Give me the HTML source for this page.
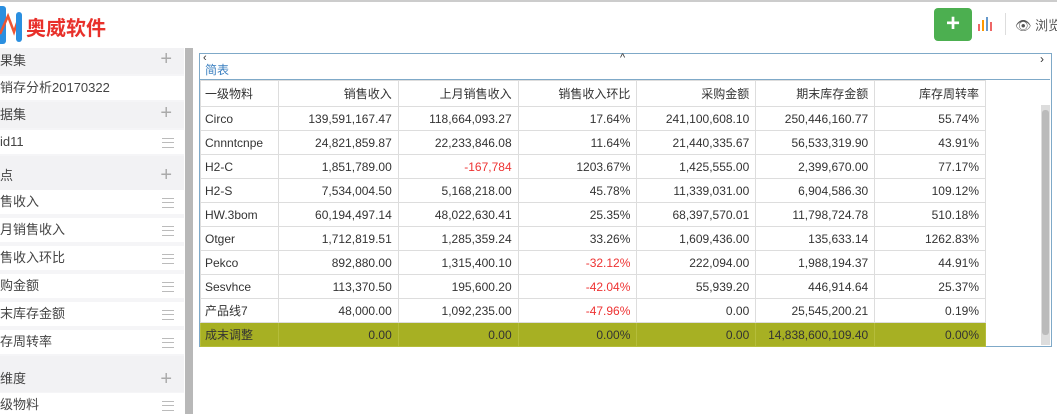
<!DOCTYPE html><html><head><meta charset="utf-8"><style>
body{margin:0;width:1057px;height:414px;overflow:hidden;background:#fff;font-family:"Liberation Sans","Noto Sans CJK SC",sans-serif;position:relative}
.a{position:absolute}
.side{left:0;top:48px;width:184px;height:366px;background:#f5f5f7}
.sh{position:absolute;left:0;width:184px;font-size:13px;color:#444;background:#f2f2f4}
.si{position:absolute;left:0;width:184px;height:24px;background:#fff;font-size:13px;color:#444;line-height:24px}
.plus{position:absolute;right:12px;top:0;color:#aaa;font-size:20px;line-height:22px}
.menu{position:absolute;right:10px;top:8px;width:12px;height:8px;border-top:1px solid #bbb;border-bottom:1px solid #bbb}
.menu:after{content:"";position:absolute;left:0;top:3px;width:12px;border-top:1px solid #bbb}
table{border-collapse:collapse;font-size:12px;color:#333}
td{border:1px solid #ddd;height:23px;padding:0 6px;text-align:right;white-space:nowrap}
td:first-child{text-align:left;padding-left:4px}
.r{color:#e33}
tr.g td{background:#a7b023;border-color:#b5bd3a}
</style></head><body>
<div class="a" style="left:0;top:0;width:1057px;height:2px;background:#ccc"></div>
<div class="a" style="left:0;top:6px;width:6px;height:38px;background:#2b8fe0;border-radius:0 3px 3px 0"></div>
<svg class="a" style="left:0;top:8px" width="26" height="36"><path d="M0 26 L8 8 L14 24 L20 6" stroke="#e53" stroke-width="2.5" fill="none"/><rect x="16" y="4" width="6" height="30" rx="3" fill="#2b8fe0"/></svg>
<div class="a" style="left:26px;top:12px;font-size:20px;font-weight:bold;color:#e8302a;font-family:'Noto Sans CJK SC',sans-serif">奥威软件</div>
<div class="a" style="left:934px;top:8px;width:38px;height:33px;background:#4caf50;border-radius:4px;color:#fff;font-size:24px;font-weight:bold;text-align:center;line-height:32px">+</div>
<svg class="a" style="left:977px;top:16px" width="16" height="16"><rect x="1" y="8" width="2" height="7" fill="#e66"/><rect x="5" y="4" width="2" height="11" fill="#f90"/><rect x="9" y="1" width="2" height="14" fill="#69c"/><rect x="13" y="6" width="2" height="9" fill="#e66"/></svg>
<div class="a" style="left:1005px;top:13px;width:1px;height:22px;background:#ddd"></div>
<div class="a" style="left:1015px;top:15px;font-size:13px;color:#555;white-space:nowrap">👁 浏览</div>
<div class="a side"></div>
<div class="sh" style="top:48px;height:26px;line-height:26px">果集<span class="plus">+</span></div>
<div class="si" style="top:76px">销存分析20170322</div>
<div class="sh" style="top:102px;height:26px;line-height:26px">据集<span class="plus">+</span></div>
<div class="si" style="top:130px">id11<span class="menu"></span></div>
<div class="sh" style="top:156px;height:34px;line-height:40px">点<span class="plus" style="top:8px">+</span></div>
<div class="si" style="top:190px">售收入<span class="menu"></span></div>
<div class="si" style="top:218px">月销售收入<span class="menu"></span></div>
<div class="si" style="top:246px">售收入环比<span class="menu"></span></div>
<div class="si" style="top:274px">购金额<span class="menu"></span></div>
<div class="si" style="top:302px">末库存金额<span class="menu"></span></div>
<div class="si" style="top:330px">存周转率<span class="menu"></span></div>
<div class="sh" style="top:356px;height:36px;line-height:46px">维度<span class="plus" style="top:12px">+</span></div>
<div class="si" style="top:393px">级物料<span class="menu"></span></div>
<div class="a" style="left:185px;top:48px;width:8px;height:366px;background:#b8b8b8"></div>
<div class="a" style="left:199px;top:53px;width:851px;height:292px;border:1px solid #7fa9c8"></div>
<div class="a" style="left:203px;top:52px;font-size:11px;color:#333">‹</div>
<div class="a" style="left:620px;top:52px;font-size:11px;color:#333">^</div>
<div class="a" style="left:1040px;top:52px;font-size:12px;color:#333">›</div>
<div class="a" style="left:205px;top:61px;font-size:12px;color:#3a7fc0">简表</div>
<div class="a" style="left:200px;top:79px;width:850px;border-top:1px solid #7fa9c8"></div>
<div class="a" style="left:1041px;top:105px;width:9px;height:240px;background:#ddd"></div>
<div class="a" style="left:1042px;top:110px;width:7px;height:225px;background:#bbb;border-radius:3px"></div>
<table class="a" style="left:200px;top:80px;width:786px">
<colgroup><col style="width:78px"><col style="width:120px"><col style="width:120px"><col style="width:119px"><col style="width:119px"><col style="width:119px"><col style="width:111px"></colgroup>
<tr style="height:26px"><td>一级物料</td><td>销售收入</td><td>上月销售收入</td><td>销售收入环比</td><td>采购金额</td><td>期末库存金额</td><td>库存周转率</td></tr>
<tr><td>Circo</td><td>139,591,167.47</td><td>118,664,093.27</td><td>17.64%</td><td>241,100,608.10</td><td>250,446,160.77</td><td>55.74%</td></tr>
<tr><td>Cnnntcnpe</td><td>24,821,859.87</td><td>22,233,846.08</td><td>11.64%</td><td>21,440,335.67</td><td>56,533,319.90</td><td>43.91%</td></tr>
<tr><td>H2-C</td><td>1,851,789.00</td><td class="r">-167,784</td><td>1203.67%</td><td>1,425,555.00</td><td>2,399,670.00</td><td>77.17%</td></tr>
<tr><td>H2-S</td><td>7,534,004.50</td><td>5,168,218.00</td><td>45.78%</td><td>11,339,031.00</td><td>6,904,586.30</td><td>109.12%</td></tr>
<tr><td>HW.3bom</td><td>60,194,497.14</td><td>48,022,630.41</td><td>25.35%</td><td>68,397,570.01</td><td>11,798,724.78</td><td>510.18%</td></tr>
<tr><td>Otger</td><td>1,712,819.51</td><td>1,285,359.24</td><td>33.26%</td><td>1,609,436.00</td><td>135,633.14</td><td>1262.83%</td></tr>
<tr><td>Pekco</td><td>892,880.00</td><td>1,315,400.10</td><td class="r">-32.12%</td><td>222,094.00</td><td>1,988,194.37</td><td>44.91%</td></tr>
<tr><td>Sesvhce</td><td>113,370.50</td><td>195,600.20</td><td class="r">-42.04%</td><td>55,939.20</td><td>446,914.64</td><td>25.37%</td></tr>
<tr><td>产品线7</td><td>48,000.00</td><td>1,092,235.00</td><td class="r">-47.96%</td><td>0.00</td><td>25,545,200.21</td><td>0.19%</td></tr>
<tr class="g"><td>成末调整</td><td>0.00</td><td>0.00</td><td>0.00%</td><td>0.00</td><td>14,838,600,109.40</td><td>0.00%</td></tr>
</table>
</body></html>
